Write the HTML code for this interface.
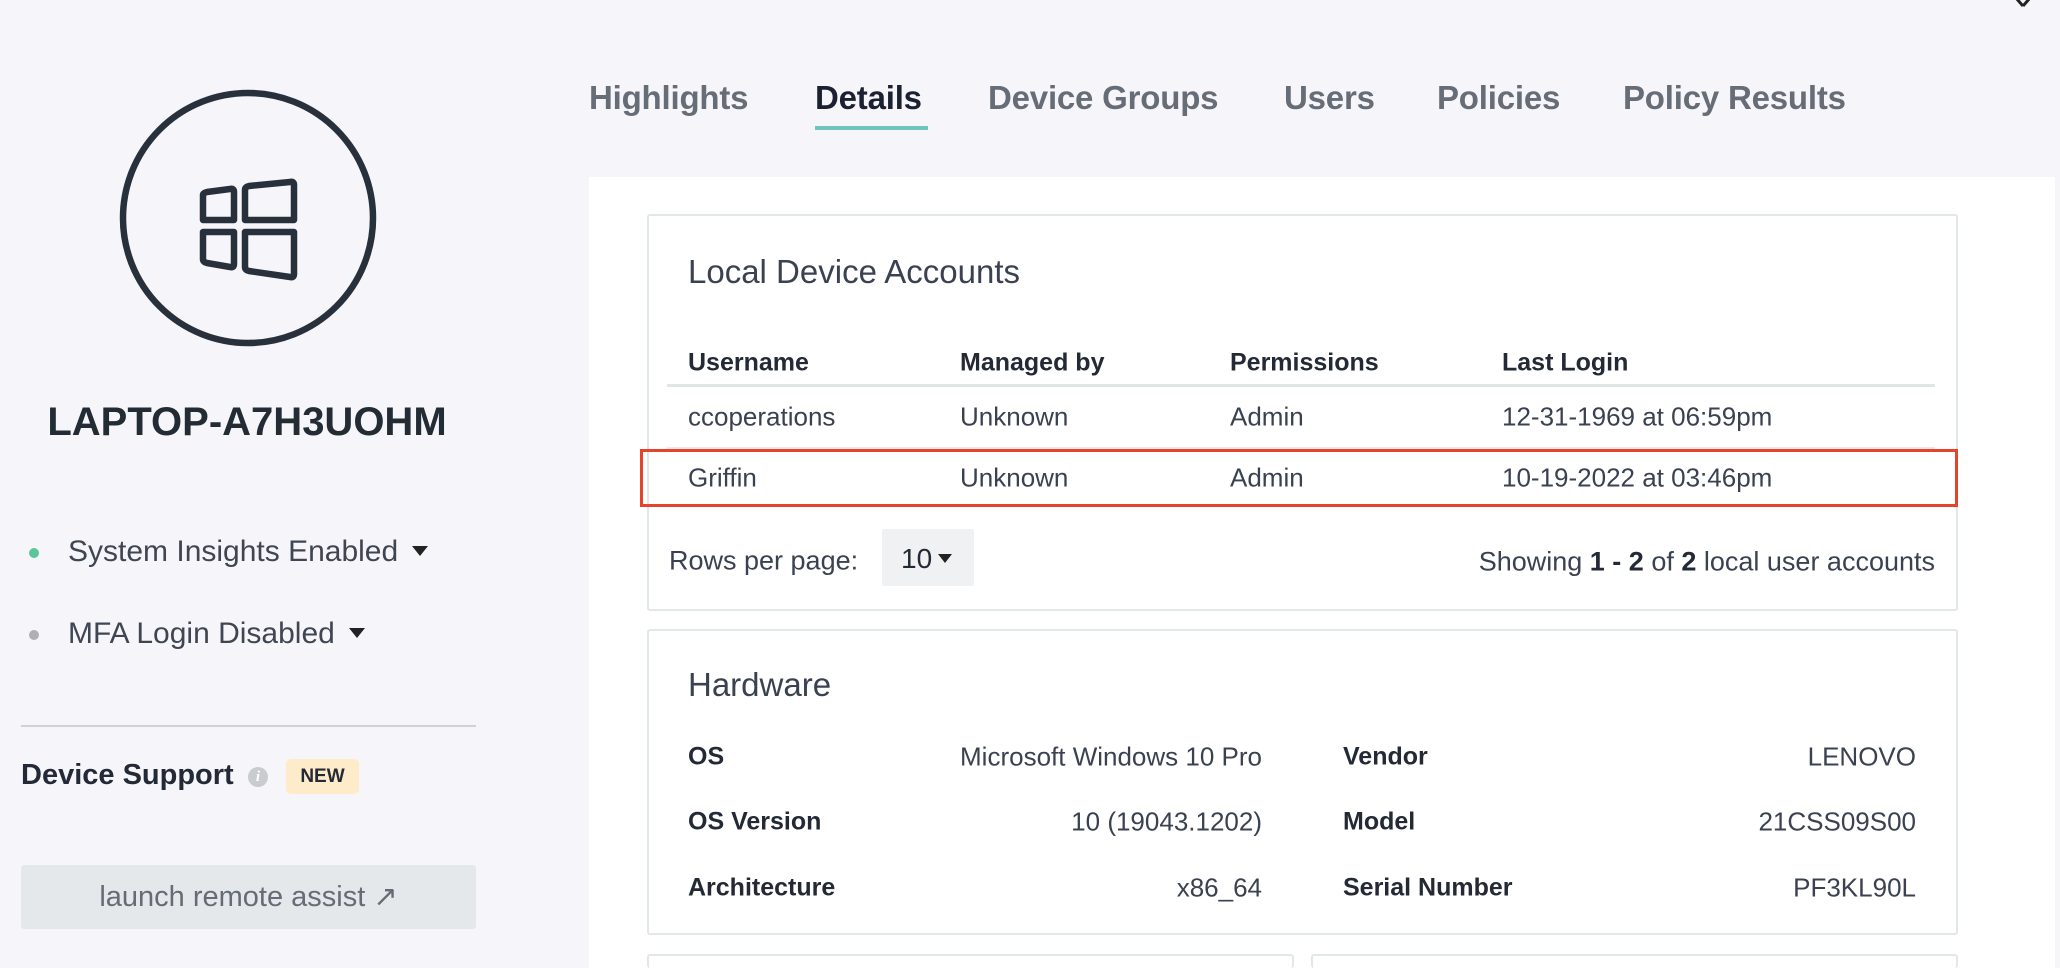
<!DOCTYPE html>
<html style="overflow:hidden;height:968px"><head><meta charset="utf-8">
<style>
*{margin:0;padding:0;box-sizing:border-box}
body{width:2060px;height:968px;overflow:hidden;background:#f6f6fa;font-family:"Liberation Sans",sans-serif;color:#3a4150;position:relative}
.a{position:absolute;white-space:nowrap}
.tab{position:absolute;top:78px;font-size:33px;font-weight:bold;color:#676d76;line-height:40px;letter-spacing:-0.2px}
.panel{position:absolute;left:589px;top:177px;width:1466px;height:791px;background:#fff}
.card{position:absolute;border:2px solid #e2e7e7;border-radius:3px;background:#fff}
.h{font-weight:bold;color:#232a36;font-size:25px}
.t{font-size:26px;color:#3a4150}
.mid{transform:translateY(-50%)}
.car{display:inline-block;width:0;height:0;border-left:8px solid transparent;border-right:8px solid transparent;border-top:10px solid #222;vertical-align:middle;margin-left:14px;position:relative;top:-2px}
</style></head><body>

<svg class="a" style="left:2005px;top:0" width="40" height="12"><path d="M4 -10 L18 6 M32 -10 L18 6" stroke="#222" stroke-width="3" fill="none"/></svg>

<!-- sidebar -->
<svg class="a" style="left:117px;top:87px" width="262" height="262" viewBox="0 0 262 262">
<circle cx="131" cy="131" r="125" fill="none" stroke="#27303b" stroke-width="6.5"/>
<g fill="none" stroke="#27303b" stroke-width="6.5" stroke-linejoin="round">
<path d="M86 108 L86 133 L117 133 L117 105 Q117 101 113 102 L90 105 Q86 106 86 108Z"/>
<path d="M128 103 L128 133 L177 133 L177 98 Q177 94 173 95 L132 99 Q128 100 128 103Z"/>
<path d="M86 145 L86 172 Q86 175 90 176 L113 180 Q117 181 117 177 L117 145Z"/>
<path d="M128 145 L128 180 Q128 183 132 184 L173 190 Q177 191 177 187 L177 145Z"/>
</g></svg>
<div class="a" style="left:0;width:494px;text-align:center;top:400px;font-size:40px;font-weight:bold;color:#232b35">LAPTOP-A7H3UOHM</div>

<div class="a" style="left:29px;top:548px;width:10px;height:10px;border-radius:50%;background:#5cc69a"></div>
<div class="a" style="left:68px;top:535px;font-size:30px;color:#3f4652">System Insights Enabled<span class="car"></span></div>
<div class="a" style="left:29px;top:630px;width:10px;height:10px;border-radius:50%;background:#aeb0b3"></div>
<div class="a" style="left:68px;top:617px;font-size:30px;color:#3f4652">MFA Login Disabled<span class="car"></span></div>

<div class="a" style="left:21px;top:725px;width:455px;height:2px;background:#cfd2d6"></div>
<div class="a" style="left:21px;top:759px;font-size:29px;font-weight:bold;color:#232a36">Device Support</div>
<div class="a" style="left:248px;top:767px;width:20px;height:20px;border-radius:50%;background:#c9cbcf;color:#fff;font-size:15px;font-style:italic;text-align:center;line-height:20px;font-family:'Liberation Serif',serif;font-weight:bold">i</div>
<div class="a" style="left:286px;top:759px;width:73px;height:35px;border-radius:5px;background:#fdebc9;font-size:19px;font-weight:bold;color:#232a36;text-align:center;line-height:35px">NEW</div>

<div class="a" style="left:21px;top:865px;width:455px;height:64px;background:#e4e8ea;border-radius:3px;text-align:center;line-height:64px;font-size:29px;color:#666c75">launch remote assist ↗</div>

<!-- tabs -->
<div class="tab" style="left:589px">Highlights</div>
<div class="tab" style="left:815px;color:#1b2131">Details</div>
<div class="a" style="left:815px;top:126px;width:113px;height:4px;background:#6cc6be"></div>
<div class="tab" style="left:988px">Device Groups</div>
<div class="tab" style="left:1284px">Users</div>
<div class="tab" style="left:1437px">Policies</div>
<div class="tab" style="left:1623px">Policy Results</div>

<div class="panel"></div>

<!-- card 1 -->
<div class="card" style="left:647px;top:214px;width:1311px;height:397px"></div>
<div class="a mid" style="left:688px;top:272px;font-size:33px;color:#3a4150">Local Device Accounts</div>
<div class="a mid h" style="left:688px;top:363px">Username</div>
<div class="a mid h" style="left:960px;top:363px">Managed by</div>
<div class="a mid h" style="left:1230px;top:363px">Permissions</div>
<div class="a mid h" style="left:1502px;top:363px">Last Login</div>
<div class="a" style="left:667px;top:384px;width:1268px;height:3px;background:#dfe6e6"></div>
<div class="a mid t" style="left:688px;top:417px">ccoperations</div>
<div class="a mid t" style="left:960px;top:417px">Unknown</div>
<div class="a mid t" style="left:1230px;top:417px">Admin</div>
<div class="a mid t" style="left:1502px;top:417px">12-31-1969 at 06:59pm</div>
<div class="a" style="left:667px;top:447px;width:1268px;height:2px;background:#e6eaea"></div>
<div class="a mid t" style="left:688px;top:478px">Griffin</div>
<div class="a mid t" style="left:960px;top:478px">Unknown</div>
<div class="a mid t" style="left:1230px;top:478px">Admin</div>
<div class="a mid t" style="left:1502px;top:478px">10-19-2022 at 03:46pm</div>
<div class="a" style="left:640px;top:449px;width:1318px;height:58px;border:3px solid #e5432a"></div>

<div class="a mid" style="left:669px;top:561px;font-size:27px">Rows per page:</div>
<div class="a" style="left:882px;top:529px;width:92px;height:57px;background:#eff1f3;border-radius:2px"></div>
<div class="a mid" style="left:901px;top:559px;font-size:28px;color:#232a36">10<span class="car" style="border-left-width:7px;border-right-width:7px;border-top-width:9px;margin-left:6px"></span></div>
<div class="a mid" style="right:125px;top:562px;font-size:27px">Showing <b style="color:#232a36">1 - 2</b> of <b style="color:#232a36">2</b> local user accounts</div>

<!-- card 2 -->
<div class="card" style="left:647px;top:629px;width:1311px;height:306px"></div>
<div class="a mid" style="left:688px;top:685px;font-size:33px;color:#3a4150">Hardware</div>
<div class="a mid h" style="left:688px;top:757px">OS</div>
<div class="a mid t" style="right:798px;top:757px">Microsoft Windows 10 Pro</div>
<div class="a mid h" style="left:1343px;top:757px">Vendor</div>
<div class="a mid t" style="right:144px;top:757px">LENOVO</div>
<div class="a mid h" style="left:688px;top:822px">OS Version</div>
<div class="a mid t" style="right:798px;top:822px">10 (19043.1202)</div>
<div class="a mid h" style="left:1343px;top:822px">Model</div>
<div class="a mid t" style="right:144px;top:822px">21CSS09S00</div>
<div class="a mid h" style="left:688px;top:888px">Architecture</div>
<div class="a mid t" style="right:798px;top:888px">x86_64</div>
<div class="a mid h" style="left:1343px;top:888px">Serial Number</div>
<div class="a mid t" style="right:144px;top:888px">PF3KL90L</div>

<div class="card" style="left:647px;top:954px;width:647px;height:14px;border-bottom:none"></div>
<div class="card" style="left:1311px;top:954px;width:647px;height:14px;border-bottom:none"></div>
</body></html>
